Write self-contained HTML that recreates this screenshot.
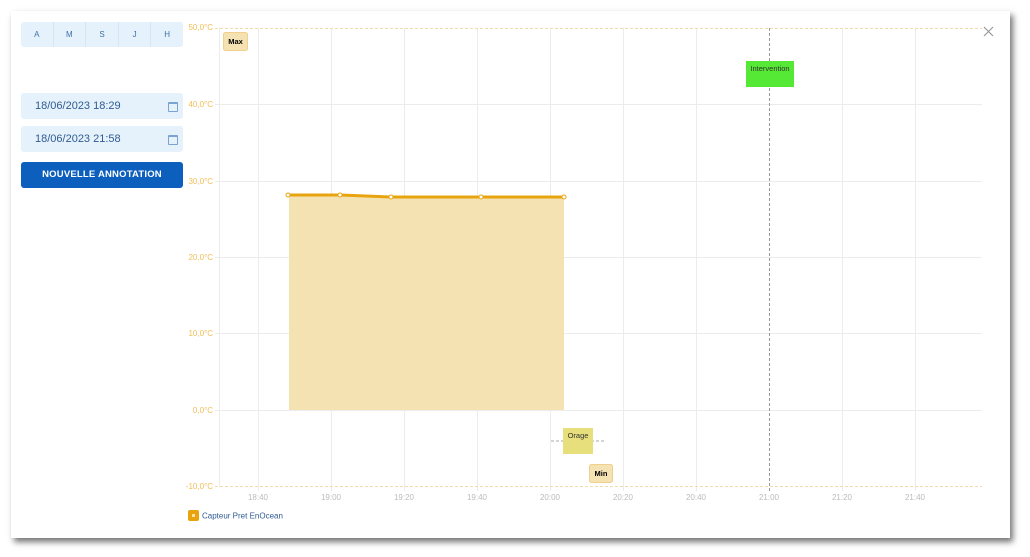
<!DOCTYPE html>
<html><head><style>
body{margin:0;width:1030px;height:557px;background:#fff;font-family:"Liberation Sans",sans-serif;position:relative;overflow:hidden}
.modal{position:absolute;left:11px;top:11px;width:999px;height:527px;background:#fff;box-shadow:3px 4px 6px rgba(0,0,0,.55)}
.tabs{position:absolute;left:21px;top:22px;width:162px;height:25px;background:#e5f2fb;border-radius:3px;display:flex}
.tabs div{flex:1;text-align:center;line-height:25px;font-size:8px;color:#3f6fa6;border-left:1px solid #d3e6f4}
.tabs div:first-child{border-left:none}
.inp{position:absolute;left:21px;width:162px;height:26px;background:#e5f2fb;border-radius:3px;font-size:11px;color:#2f5b94;line-height:26px;box-sizing:border-box;padding-left:14px}
.cal{position:absolute;right:5px;top:9px;width:8px;height:7px;border:1px solid #7aa3cf;border-top-width:2px;border-radius:1px}
.btn{position:absolute;left:21px;top:162px;width:162px;height:26px;background:#0c5fbc;border-radius:3px;color:#fff;font-size:9.5px;font-weight:bold;text-align:center;line-height:26px;letter-spacing:.2px}
svg{position:absolute;left:0;top:0}
</style></head><body>
<div class="modal"></div>
<div class="tabs"><div>A</div><div>M</div><div>S</div><div>J</div><div>H</div></div>
<div class="inp" style="top:93px">18/06/2023 18:29<span class="cal"></span></div>
<div class="inp" style="top:126px">18/06/2023 21:58<span class="cal"></span></div>
<div class="btn">NOUVELLE ANNOTATION</div>
<svg width="1030" height="557" font-family="Liberation Sans, sans-serif">
<g stroke="#ececec" stroke-width="1">
<line x1="219.5" y1="28" x2="219.5" y2="487"/>
<line x1="258.5" y1="28" x2="258.5" y2="491"/><line x1="331.5" y1="28" x2="331.5" y2="491"/><line x1="404.5" y1="28" x2="404.5" y2="491"/><line x1="477.5" y1="28" x2="477.5" y2="491"/><line x1="550.5" y1="28" x2="550.5" y2="491"/><line x1="623.5" y1="28" x2="623.5" y2="491"/><line x1="696.5" y1="28" x2="696.5" y2="491"/><line x1="842.5" y1="28" x2="842.5" y2="491"/><line x1="915.5" y1="28" x2="915.5" y2="491"/>
<line x1="215" y1="104.5" x2="982" y2="104.5"/><line x1="215" y1="181.5" x2="982" y2="181.5"/><line x1="215" y1="257.5" x2="982" y2="257.5"/><line x1="215" y1="333.5" x2="982" y2="333.5"/><line x1="215" y1="410.5" x2="982" y2="410.5"/>
</g>
<g stroke="#f0dcae" stroke-dasharray="3,2"><line x1="215" y1="28.5" x2="982" y2="28.5"/><line x1="215" y1="486.5" x2="982" y2="486.5"/></g>
<line x1="769.5" y1="28" x2="769.5" y2="491" stroke="#999" stroke-dasharray="3,2"/>
<g fill="#f2bd55" font-size="8" text-anchor="end">
<text x="213" y="30">50,0°C</text><text x="213" y="107">40,0°C</text><text x="213" y="184">30,0°C</text><text x="213" y="260">20,0°C</text><text x="213" y="336">10,0°C</text><text x="213" y="413">0,0°C</text><text x="213" y="489">-10,0°C</text>
</g>
<g fill="#bbb" font-size="8" text-anchor="middle">
<text x="258" y="500">18:40</text><text x="331" y="500">19:00</text><text x="404" y="500">19:20</text><text x="477" y="500">19:40</text><text x="550" y="500">20:00</text><text x="623" y="500">20:20</text><text x="696" y="500">20:40</text><text x="769" y="500">21:00</text><text x="842" y="500">21:20</text><text x="915" y="500">21:40</text>
</g>
<path d="M289 195 L340 195 L391 197 L481 197 L564 197 L564 410 L289 410Z" fill="#f5e2b3"/>
<polyline points="288,195 340,195 391,197 481,197 564,197" fill="none" stroke="#e8a40f" stroke-width="3"/>
<g fill="#fff" stroke="#e8a40f" stroke-width="1"><circle cx="288" cy="195" r="2"/><circle cx="340" cy="195" r="2"/><circle cx="391" cy="197" r="2"/><circle cx="481" cy="197" r="2"/><circle cx="564" cy="197" r="2"/></g>
<rect x="223.5" y="32.5" width="24" height="18" rx="2" fill="#f5e2b3" stroke="#f0d08a"/>
<text x="235.5" y="44" font-size="7.5" font-weight="bold" text-anchor="middle">Max</text>
<rect x="589.5" y="464.5" width="23" height="18" rx="2" fill="#f5e2b3" stroke="#f0d08a"/>
<text x="601" y="476" font-size="7.5" font-weight="bold" text-anchor="middle">Min</text>
<line x1="551" y1="441" x2="604" y2="441" stroke="#aaa" stroke-dasharray="3,2"/>
<rect x="563" y="428" width="30" height="26" fill="#e6df7c"/>
<text x="578" y="438" font-size="7.5" text-anchor="middle" fill="#333">Orage</text>
<rect x="746" y="61" width="48" height="26" fill="#55e834"/>
<text x="770" y="71" font-size="7.5" text-anchor="middle" fill="#333">Intervention</text>
<path d="M984 27 L993 36 M993 27 L984 36" stroke="#999" stroke-width="1.2"/>
<rect x="188" y="510" width="11" height="11" rx="2" fill="#e8a40f"/><rect x="192" y="514" width="3" height="3" fill="#fbe3a8"/>
<text x="202" y="518.5" font-size="8" fill="#2f5b94">Capteur Pret EnOcean</text>
</svg>
</body></html>
